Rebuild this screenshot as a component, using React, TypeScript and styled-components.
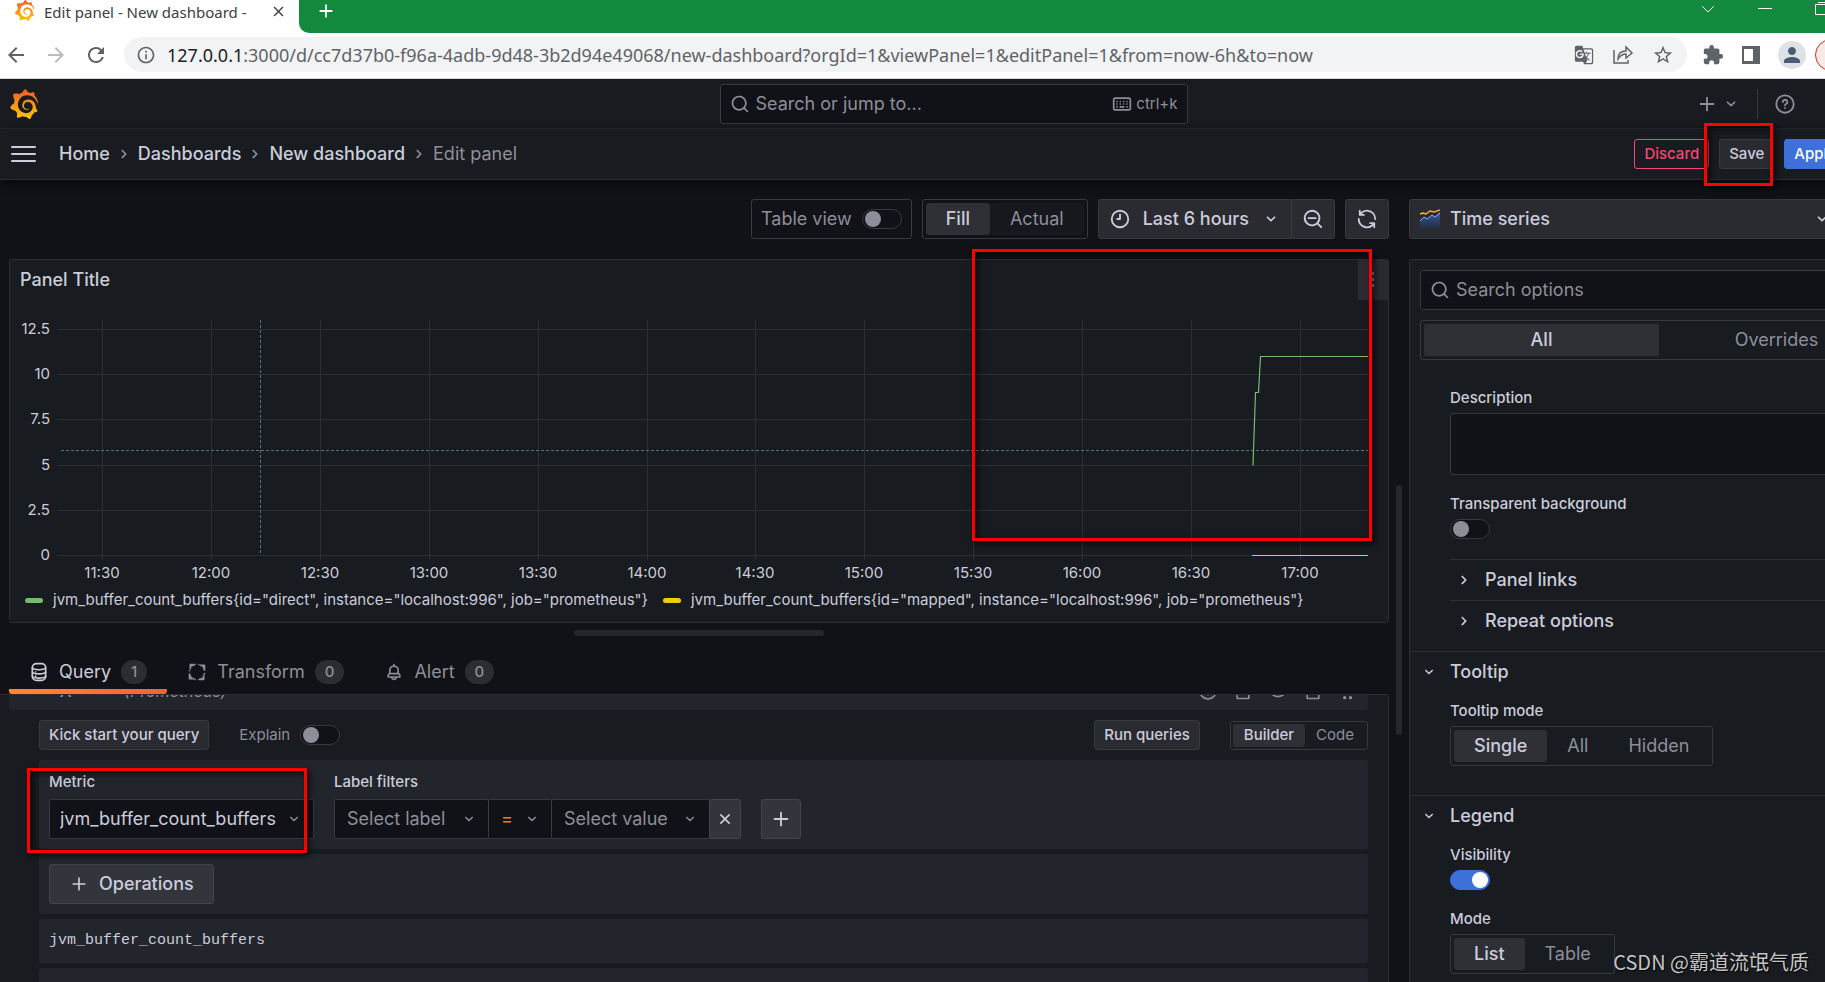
import React from "react";
import styled, { createGlobalStyle, css } from "styled-components";
import { SiGrafana } from "react-icons/si";
import {
  MdArrowBack,
  MdArrowForward,
  MdExtension,
  MdGTranslate,
  MdInfoOutline,
  MdPerson,
  MdRefresh,
  MdStarBorder,
  MdClose,
  MdAdd,
} from "react-icons/md";

const c = {
  canvas: "#111217",
  primary: "#181b1f",
  secondary: "#22252b",
  button: "#2a2b31",
  selected: "#2e3035",
  raised: "#32353c",
  weak: "#2b2d32",
  medium: "#37393f",
  text: "#ccccdc",
  muted: "#8e8e9a",
  blue: "#3d71d9",
  red: "#f3476f",
};

const GlobalStyle = createGlobalStyle`
  *, *::before, *::after { box-sizing: border-box; }
  html, body { margin: 0; background: ${c.canvas}; }
  body { overflow: hidden; }
  body, button, input, select, textarea {
    font-family: Inter, "Noto Sans CJK SC", sans-serif;
    font-size: 18px;
    line-height: 24px;
    color: ${c.text};
  }
  button { cursor: pointer; padding: 0; border: 0; background: none; }
  svg { display: block; flex: none; }
`;

/* ---------- icons ---------- */

const paths = {
  search:
    "M21.71,20.29,18,16.61A9,9,0,1,0,16.61,18l3.68,3.68a1,1,0,0,0,1.42,0A1,1,0,0,0,21.71,20.29ZM11,18a7,7,0,1,1,7-7A7,7,0,0,1,11,18Z",
  zoomOut:
    "M21.71,20.29,18,16.61A9,9,0,1,0,16.61,18l3.68,3.68a1,1,0,0,0,1.42,0A1,1,0,0,0,21.71,20.29ZM11,18a7,7,0,1,1,7-7A7,7,0,0,1,11,18Zm4-8H7a1,1,0,0,0,0,2h8a1,1,0,0,0,0-2Z",
  clock:
    "M12,2A10,10,0,1,0,22,12,10,10,0,0,0,12,2Zm0,18a8,8,0,1,1,8-8A8,8,0,0,1,12,20ZM12,6a1,1,0,0,0-1,1v4H9a1,1,0,0,0,0,2h3a1,1,0,0,0,1-1V7A1,1,0,0,0,12,6Z",
  down:
    "M17,9.17a1,1,0,0,0-1.41,0L12,12.71,8.46,9.17a1,1,0,0,0-1.41,0,1,1,0,0,0,0,1.42l4.24,4.24a1,1,0,0,0,1.42,0L17,10.59A1,1,0,0,0,17,9.17Z",
  right:
    "M14.83,11.29,10.59,7.05a1,1,0,0,0-1.42,0,1,1,0,0,0,0,1.41L12.71,12,9.17,15.54a1,1,0,0,0,0,1.41,1,1,0,0,0,.71.29,1,1,0,0,0,.71-.29l4.24-4.24A1,1,0,0,0,14.83,11.29Z",
  plus: "M19,11H13V5a1,1,0,0,0-2,0v6H5a1,1,0,0,0,0,2h6v6a1,1,0,0,0,2,0V13h6a1,1,0,0,0,0-2Z",
  times:
    "M13.41,12l4.3-4.29a1,1,0,1,0-1.42-1.42L12,10.59,7.71,6.29A1,1,0,0,0,6.29,7.71L10.59,12l-4.3,4.29a1,1,0,0,0,0,1.42,1,1,0,0,0,1.42,0L12,13.41l4.29,4.3a1,1,0,0,0,1.42,0,1,1,0,0,0,0-1.42Z",
  sync:
    "M19.91,15.51H15.38a1,1,0,0,0,0,2h2.4A8,8,0,0,1,4,12a1,1,0,1,0-2,0,10,10,0,0,0,16.88,7.23V21a1,1,0,0,0,2,0V16.5A1,1,0,0,0,19.91,15.51ZM12,2A10,10,0,0,0,5.12,4.77V3a1,1,0,0,0-2,0V7.5a1,1,0,0,0,1,1h4.5a1,1,0,0,0,0-2H6.22A8,8,0,0,1,20,12a1,1,0,0,0,2,0A10,10,0,0,0,12,2Z",
  bell:
    "M18,13.18V10a6,6,0,0,0-5-5.91V3a1,1,0,0,0-2,0V4.09A6,6,0,0,0,6,10v3.18A3,3,0,0,0,4,16v2a1,1,0,0,0,1,1H8.14a4,4,0,0,0,7.72,0H19a1,1,0,0,0,1-1V16A3,3,0,0,0,18,13.18ZM8,10a4,4,0,0,1,8,0v3H8Zm4,10a2,2,0,0,1-1.72-1h3.44A2,2,0,0,1,12,20Zm6-3H6V16a1,1,0,0,1,1-1H17a1,1,0,0,1,1,1Z",
};

const Icon = ({ name, size = 20 }: { name: keyof typeof paths; size?: number }) => (
  <svg width={size} height={size} viewBox="0 0 24 24" fill="currentColor" aria-hidden="true">
    <path d={paths[name]} />
  </svg>
);

const LineIcon = ({ size = 20, children }: { size?: number; children: React.ReactNode }) => (
  <svg
    width={size}
    height={size}
    viewBox="0 0 24 24"
    fill="none"
    stroke="currentColor"
    strokeWidth="2"
    strokeLinecap="round"
    strokeLinejoin="round"
    aria-hidden="true"
  >
    {children}
  </svg>
);

const DatabaseIcon = () => (
  <LineIcon>
    <rect x="4" y="2" width="16" height="20" rx="5" />
    <path d="M4 7c1 3 15 3 16 0M4 12c1 3 15 3 16 0M4 17c1 3 15 3 16 0" />
    <path d="M8 12h.01M8 17h.01" />
  </LineIcon>
);

const TransformIcon = () => (
  <LineIcon>
    <path d="M8 3H4M4 3v5M5 5C6.5 4 8 3.4 9.5 3" />
    <path d="M21 8V4M21 4h-5M19 5C20 6.5 20.6 8 21 9.5" />
    <path d="M16 21H20M20 21v-5M19 19C17.5 20 16 20.6 14.5 21" />
    <path d="M3 16V20M3 20h5M5 19C4 17.5 3.400 16 3 14.5" />
    <path d="M14 3h.01M3 10.5h.01M21 14h.01M10 21h.01" />
  </LineIcon>
);

const HelpIcon = ({ size = 22 }: { size?: number }) => (
  <LineIcon size={size}>
    <circle cx="12" cy="12" r="9.5" />
    <path d="M9.7 9.8a2.4 2.4 0 1 1 3.4 2.2c-.7.3-1.1.7-1.1 1.4M12 16.3v.1" />
  </LineIcon>
);

const KeyboardIcon = () => (
  <LineIcon size={20}>
    <rect x="2" y="5" width="20" height="14" rx="2" />
    <path d="M6 9h.01M10 9h.01M14 9h.01M18 9h.01M6 12h.01M10 12h.01M14 12h.01M18 12h.01M6 15.5h.01M10 15.5h4M18 15.5h.01" />
  </LineIcon>
);

const SeriesIcon = () => (
  <svg width="20" height="20" viewBox="0 0 20 20" aria-hidden="true">
    <defs>
      <linearGradient id="area" x1="0" y1="0" x2="0" y2="1">
        <stop offset="0" stopColor="#3865ab" />
        <stop offset="1" stopColor="#203a66" stopOpacity="0.4" />
      </linearGradient>
      <linearGradient id="amber" x1="0" y1="0" x2="1" y2="0">
        <stop offset="0" stopColor="#f2cc0c" />
        <stop offset="1" stopColor="#ff9830" />
      </linearGradient>
    </defs>
    <path d="M0 12 4 8l3 2 5-4 3 2 5-5v16H0Z" fill="url(#area)" />
    <path d="M0 12 4 8l3 2 5-4 3 2 5-4" fill="none" stroke="#84aff1" />
    <path d="M0 5 3 4l3 1 4-3 4 1 6-2" fill="none" stroke="url(#amber)" strokeWidth="1.5" />
  </svg>
);

const GrafanaMark = ({ size, id }: { size: number; id: string }) => (
  <>
    <svg width="0" height="0" aria-hidden="true">
      <linearGradient id={id} x1="0" y1="0" x2="0" y2="1">
        <stop offset="0" stopColor="#f05a28" />
        <stop offset="1" stopColor="#fbca0a" />
      </linearGradient>
    </svg>
    <SiGrafana size={size} fill={`url(#${id})`} />
  </>
);

/* ---------- shared controls ---------- */

const Button = styled.button<{ $look?: "plain" | "danger" | "main" | "raised"; $size?: "sm" | "md" | "wide" }>`
  display: inline-flex;
  align-items: center;
  justify-content: center;
  gap: ${(p) => (p.$size === "wide" ? 10 : 12)}px;
  border: 1px solid ${c.medium};
  border-radius: 3px;
  background: ${c.button};
  font-weight: 500;
  white-space: nowrap;
  ${(p) =>
    p.$size === "sm"
      ? css`
          height: 30px;
          padding: 0 9px;
          font-size: 15px;
        `
      : css`
          height: 40px;
          padding: 0 ${p.$size === "wide" ? 19 : 10}px;
        `}
  ${(p) => p.$look === "danger" && css`background: transparent; border-color: ${c.red}; color: ${c.red};`}
  ${(p) => p.$look === "main" && css`background: ${c.blue}; border-color: ${c.blue}; color: #fff;`}
  ${(p) => p.$look === "raised" && css`background: ${c.raised}; border-color: #42454c;`}
`;

const Switch = styled.input.attrs({ type: "checkbox" })`
  appearance: none;
  flex: none;
  display: flex;
  align-items: center;
  width: 40px;
  height: 20px;
  margin: 0;
  padding: 0 2px;
  border: 1px solid ${c.medium};
  border-radius: 10px;
  background: ${c.canvas};
  &::before {
    content: "";
    width: 16px;
    height: 16px;
    border-radius: 50%;
    background: ${c.muted};
  }
  &:checked {
    justify-content: flex-end;
    padding: 0 1px;
    border-color: ${c.blue};
    background: ${c.blue};
  }
  &:checked::before {
    background: #fff;
  }
`;

const RadioBox = styled.div<{ $fill?: boolean; $small?: boolean; $tinted?: boolean }>`
  display: ${(p) => (p.$fill ? "flex" : "inline-flex")};
  height: ${(p) => (p.$small ? 29 : 40)}px;
  padding: ${(p) => (p.$small ? 2 : 3)}px;
  border: 1px solid ${c.medium};
  border-radius: 3px;
  label {
    flex: ${(p) => (p.$fill ? "1 1 0" : "none")};
    display: flex;
    align-items: center;
    justify-content: center;
    padding: 0 ${(p) => (p.$small ? 11 : 20)}px;
    border-radius: 3px;
    font-size: ${(p) => (p.$small ? 15 : 18)}px;
    color: ${c.muted};
    background: ${(p) => (p.$tinted ? "#15181c" : "transparent")};
  }
  input {
    appearance: none;
    width: 0;
    height: 0;
    margin: 0;
  }
  label:has(input:checked) {
    background: ${c.selected};
    color: ${c.text};
    font-weight: 500;
  }
`;

const RadioGroup = ({
  name,
  options,
  ...look
}: {
  name: string;
  options: string[];
  $fill?: boolean;
  $small?: boolean;
  $tinted?: boolean;
}) => (
  <RadioBox role="radiogroup" aria-label={name} {...look}>
    {options.map((o, i) => (
      <label key={o}>
        <input type="radio" name={name} defaultChecked={i === 0} />
        {o}
      </label>
    ))}
  </RadioBox>
);

const SelectShell = styled.div<{ $width: number; $tone?: "muted" | "operator" }>`
  display: grid;
  align-items: center;
  width: ${(p) => p.$width}px;
  select,
  svg {
    grid-area: 1 / 1;
  }
  select {
    appearance: none;
    width: 100%;
    height: 40px;
    padding: 0 32px 0 ${(p) => (p.$tone ? 12 : 10)}px;
    border: 1px solid ${c.medium};
    border-radius: 2px;
    background: ${c.canvas};
    color: ${(p) => (p.$tone === "operator" ? "#ff780a" : p.$tone === "muted" ? c.muted : c.text)};
  }
  svg {
    justify-self: end;
    margin-right: 11px;
    color: ${c.muted};
    pointer-events: none;
  }
`;

const Select = ({
  label,
  value,
  width,
  tone,
  id,
}: {
  label: string;
  value: string;
  width: number;
  tone?: "muted" | "operator";
  id?: string;
}) => (
  <SelectShell $width={width} $tone={tone}>
    <select id={id} aria-label={label}>
      <option>{value}</option>
    </select>
    <Icon name="down" size={18} />
  </SelectShell>
);

const TextField = styled.div`
  display: flex;
  align-items: center;
  gap: 6px;
  height: 40px;
  padding: 0 9px;
  border: 1px solid ${c.medium};
  border-radius: 3px;
  background: ${c.canvas};
  color: ${c.muted};
  input {
    flex: 1;
    min-width: 0;
    padding: 0;
    border: 0;
    outline: 0;
    background: none;
  }
  input::placeholder {
    color: ${c.muted};
    opacity: 1;
  }
`;

const Callout = styled.div<{ $box: string }>`
  position: absolute;
  inset: ${(p) => p.$box};
  z-index: 2;
  border: 3px solid #f00;
  box-shadow: 3px 3px 6px rgba(0, 0, 0, 0.6), inset 3px 3px 6px rgba(0, 0, 0, 0.6);
  pointer-events: none;
`;

/* ---------- browser frame ---------- */

const Window = styled.div`
  height: 100vh;
  overflow: hidden;
  position: relative;
`;

const TabStrip = styled.div`
  display: flex;
  height: 33px;
  background: #fff;
`;

const BrowserTab = styled.div`
  flex: none;
  display: flex;
  align-items: flex-start;
  width: 299px;
  padding: 0 0 0 14px;
  font: 15px/24px "Noto Sans", sans-serif;
  color: #3c4043;
  button {
    margin: 3px 0 0 10px;
    color: #3c4043;
  }
`;

const TabTitle = styled.span`
  width: 216px;
  margin-left: 9px;
  overflow: hidden;
  white-space: nowrap;
`;

const StripRest = styled.div`
  flex: 1;
  display: flex;
  align-items: flex-start;
  justify-content: space-between;
  padding-left: 16px;
  border-bottom-left-radius: 10px;
  background: #12893d;
  button { color: #fff; }
`;

const WindowButtons = styled.div`
  display: flex;
  gap: 40px;
  width: 126px;
  overflow: hidden;
`;

const AddressRow = styled.div`
  display: flex;
  align-items: center;
  height: 46px;
  padding: 0 0 2px 4px;
  border-bottom: 1px solid #d5d7da;
  background: #fff;
  overflow: hidden;
  button { color: #5f6368; }
`;

const HistoryButtons = styled.div`
  display: flex;
  gap: 16px;
  margin-right: 16px;
  button:nth-child(2) { color: #b9bbbe; }
`;

const AddressBar = styled.div`
  flex: 1;
  display: flex;
  align-items: center;
  height: 35px;
  padding: 0 13px 0 12px;
  border-radius: 18px;
  background: #f1f3f4;
  color: #5f6368;
  font: 18px/24px "Noto Sans", sans-serif;
`;

const Url = styled.span`
  flex: 1;
  margin-left: 11px;
  white-space: nowrap;
  b { font-weight: 400; color: #202124; }
`;

const AddressActions = styled.div`
  display: flex;
  gap: 18px;
`;

const ExtensionButtons = styled.div`
  display: flex;
  align-items: center;
  gap: 17px;
  width: 138px;
  padding-left: 15px;
`;

const Avatar = styled.span`
  display: grid;
  place-items: center;
  flex: none;
  width: 28px;
  height: 28px;
  border-radius: 50%;
  background: #dee1e6;
  color: #4b5b75;
`;

const UpdatePill = styled.span`
  flex: none;
  width: 60px;
  height: 32px;
  margin-left: -8px;
  border: 1px solid #d93025;
  border-radius: 16px;
  background: #fce8e6;
`;

const BrowserFrame = () => (
  <>
    <TabStrip>
      <BrowserTab>
        <GrafanaMark size={21} id="tabMark" />
        <TabTitle>Edit panel - New dashboard - </TabTitle>
        <button aria-label="Close tab">
          <MdClose size={17} />
        </button>
      </BrowserTab>
      <StripRest>
        <button aria-label="New tab">
          <MdAdd size={22} />
        </button>
        <WindowButtons>
          <button aria-label="Search tabs">
            <svg width="18" height="18" fill="none" stroke="#fff"><path d="m3 6 6 6 6-6" /></svg>
          </button>
          <button aria-label="Minimize">
            <svg width="16" height="18" stroke="#fff"><path d="M1 8.5h14" /></svg>
          </button>
          <button aria-label="Restore">
            <svg width="18" height="18" fill="none" stroke="#fff"><path d="M2.5 4.5h10v10h-10zM5 2.5h10v10" /></svg>
          </button>
        </WindowButtons>
      </StripRest>
    </TabStrip>
    <AddressRow>
      <HistoryButtons>
        <button aria-label="Back"><MdArrowBack size={24} /></button>
        <button aria-label="Forward"><MdArrowForward size={24} /></button>
        <button aria-label="Reload"><MdRefresh size={24} /></button>
      </HistoryButtons>
      <AddressBar>
        <MdInfoOutline size={20} />
        <Url>
          <b>127.0.0.1</b>:3000/d/cc7d37b0-f96a-4adb-9d48-3b2d94e49068/new-dashboard?orgId=1&amp;viewPanel=1&amp;editPanel=1&amp;from=now-6h&amp;to=now
        </Url>
        <AddressActions>
          <button aria-label="Translate"><MdGTranslate size={20} /></button>
          <button aria-label="Share">
            <svg width="22" height="22" fill="none" stroke="currentColor" strokeWidth="1.5">
              <path d="M2 6v13h14v-3M6 15c0-5 3-8 8-8V3l6 6-6 5v-4c-4 0-6 2-8 5Z" />
            </svg>
          </button>
          <button aria-label="Bookmark"><MdStarBorder size={22} /></button>
        </AddressActions>
      </AddressBar>
      <ExtensionButtons>
        <button aria-label="Extensions"><MdExtension size={22} /></button>
        <button aria-label="Side panel">
          <svg width="20" height="20"><path fill="currentColor" fillRule="evenodd" d="M1 1h18v18H1ZM3 4v12h9V4Z" /></svg>
        </button>
        <Avatar><MdPerson size={24} /></Avatar>
        <UpdatePill />
      </ExtensionButtons>
    </AddressRow>
  </>
);

/* ---------- application shell ---------- */

/* The application is wider than the window and runs off its right edge. */
const Shell = styled.div`
  width: calc(100% + 95px);
  background: ${c.canvas};
`;

const TopBar = styled.header`
  display: grid;
  grid-template-columns: 1fr 468px 1fr;
  align-items: center;
  height: 50px;
  padding: 0 22px 0 9px;
  border-bottom: 1px solid ${c.weak};
  background: ${c.primary};
`;

const Hint = styled.span`
  display: flex;
  align-items: center;
  gap: 4px;
  font-size: 15px;
`;

const TopActions = styled.div`
  justify-self: end;
  display: flex;
  align-items: center;
  color: ${c.muted};
  padding-right: 102px;
  button {
    display: flex;
    align-items: center;
    gap: 3px;
    color: inherit;
  }
  hr {
    width: 1px;
    height: 30px;
    margin: 0 16px;
    border: 0;
    background: ${c.medium};
  }
`;

const NavBar = styled.nav`
  position: relative;
  z-index: 1;
  display: flex;
  align-items: center;
  height: 51px;
  padding: 0 74px 0 10px;
  border-bottom: 1px solid ${c.weak};
  background: ${c.primary};
  box-shadow: 0 3px 9px #08090b;
`;

const Crumbs = styled.ol`
  flex: 1;
  display: flex;
  align-items: center;
  margin: 0;
  padding: 0 0 0 23px;
  list-style: none;
  font-weight: 500;
  li { display: flex; align-items: center; }
  li svg { margin: 0 4px; color: ${c.muted}; }
  a { color: inherit; text-decoration: none; }
  li:last-child { color: ${c.muted}; font-weight: 400; }
`;

const NavActions = styled.div`
  display: flex;
  gap: 10px;
`;

const Anchor = styled.div`
  position: relative;
  display: flex;
`;

const Header = () => (
  <>
    <TopBar>
      <a href="#home" aria-label="Grafana home">
        <GrafanaMark size={30} id="homeMark" />
      </a>
      <TextField>
        <Icon name="search" />
        <input aria-label="Search" placeholder="Search or jump to..." />
        <Hint>
          <KeyboardIcon />
          ctrl+k
        </Hint>
      </TextField>
      <TopActions>
        <button aria-label="New">
          <Icon name="plus" size={22} />
          <Icon name="down" />
        </button>
        <hr />
        <button aria-label="Help">
          <HelpIcon />
        </button>
      </TopActions>
    </TopBar>
    <NavBar>
      <button aria-label="Open menu">
        <svg width="26" height="18" stroke={c.text} strokeWidth="2" strokeLinecap="round">
          <path d="M2 2h23M2 9h23M2 16h23" />
        </svg>
      </button>
      <Crumbs>
        {["Home", "Dashboards", "New dashboard"].map((t) => (
          <li key={t}>
            <a href="#crumb">{t}</a>
            <Icon name="right" />
          </li>
        ))}
        <li>Edit panel</li>
      </Crumbs>
      <NavActions>
        <Button $size="sm" $look="danger">Discard</Button>
        <Anchor>
          <Button $size="sm">Save</Button>
          <Callout $box="-16px 1px -17px -15px" />
        </Anchor>
        <Button $size="sm" $look="main">Apply</Button>
      </NavActions>
    </NavBar>
  </>
);

/* ---------- visualization ---------- */

const Workspace = styled.main`
  display: grid;
  grid-template-columns: minmax(0, 1fr) 20px 500px;
  padding: 19px 11px 0 0;
`;

const Column = styled.div`
  display: flex;
  flex-direction: column;
  min-width: 0;
`;

const Tools = styled.div`
  display: flex;
  justify-content: flex-end;
  gap: 10px;
  margin-bottom: 20px;
`;

const ToggleLabel = styled.label<{ $boxed?: boolean }>`
  display: flex;
  align-items: center;
  gap: 10px;
  color: ${c.muted};
  font-size: ${(p) => (p.$boxed ? 18 : 15)}px;
  ${(p) => p.$boxed && css`
    height: 40px;
    padding: 0 9px;
    border: 1px solid ${c.medium};
    border-radius: 3px;
  `}
`;

const Joined = styled.div`
  display: flex;
  button:not(:first-child) {
    margin-left: -1px;
    border-top-left-radius: 0;
    border-bottom-left-radius: 0;
  }
  button:not(:last-child) {
    border-top-right-radius: 0;
    border-bottom-right-radius: 0;
  }
`;

const Panel = styled.section`
  position: relative;
  margin-left: 9px;
  border: 1px solid ${c.weak};
  border-radius: 3px;
  background: ${c.primary};
`;

const PanelHead = styled.div`
  display: flex;
  justify-content: space-between;
  height: 40px;
  padding-left: 10px;
  h2 {
    margin: 0;
    font-size: 18px;
    font-weight: 500;
    line-height: 40px;
  }
  button {
    display: grid;
    place-items: center;
    width: 30px;
    background: ${c.button};
  }
`;

const Plot = styled.svg`
  width: 100%;
  height: auto;
  font-size: 15px;
  fill: ${c.text};
`;

const Legend = styled.ul`
  display: flex;
  gap: 15px;
  margin: 0;
  padding: 5px 15px 10px;
  list-style: none;
  font-size: 15px;
  white-space: nowrap;
  li { display: flex; align-items: center; gap: 10px; }
`;

const Swatch = styled.span<{ $color: string }>`
  width: 18px;
  height: 5px;
  border-radius: 3px;
  background: ${(p) => p.$color};
`;

const rows: [string, number][] = [
  ["12.5", 29], ["10", 74], ["7.5", 119], ["5", 165], ["2.5", 210], ["0", 255],
];
const hours = ["11:30", "12:00", "12:30", "13:00", "13:30", "14:00", "14:30", "15:00", "15:30", "16:00", "16:30", "17:00"];
const columnX = (i: number) => Math.round(92 + (i * 1198) / 11);

const Chart = () => (
  <Plot viewBox="0 0 1378 283" role="img" aria-label="jvm_buffer_count_buffers over the last 6 hours">
    <g shapeRendering="crispEdges" fill="#2c2f32">
      {rows.map(([t, y]) => (
        <rect key={t} x="47" y={y} width="1311" height="1" />
      ))}
      {hours.map((t, i) => (
        <rect key={t} x={columnX(i)} y="20" width="1" height="240" />
      ))}
    </g>
    <g textAnchor="end">
      {rows.map(([t, y]) => (
        <text key={t} x="40" y={y + 5}>{t}</text>
      ))}
    </g>
    <g textAnchor="middle">
      {hours.map((t, i) => (
        <text key={t} x={columnX(i)} y="278">{t}</text>
      ))}
    </g>
    <g fill="none" stroke="#557480" strokeDasharray="3 2" shapeRendering="crispEdges">
      <path d="M250.5 20v235M51 150.5h1307" />
    </g>
    <path d="M1243 165.5 1245.5 92.5h3L1250.5 56.5h107.5" fill="none" stroke="#73bf69" strokeWidth="1.2" />
    <path d="M1242 255.5h116" stroke="#f2cc0c" strokeWidth="1.2" />
  </Plot>
);

const Visualization = () => (
  <>
    <Tools>
      <ToggleLabel $boxed>
        Table view
        <Switch />
      </ToggleLabel>
      <RadioGroup name="Panel size" options={["Fill", "Actual"]} $tinted />
      <Joined>
        <Button>
          <Icon name="clock" size={22} />
          Last 6 hours
          <Icon name="down" />
        </Button>
        <Button aria-label="Zoom out">
          <Icon name="zoomOut" size={22} />
        </Button>
      </Joined>
      <Button aria-label="Refresh">
        <Icon name="sync" size={22} />
      </Button>
    </Tools>
    <Panel>
      <PanelHead>
        <h2>Panel Title</h2>
        <button aria-label="Panel menu">
          <svg width="6" height="18" fill={c.muted}>
            <path d="M1 1h3v3H1zM1 7h3v3H1zM1 13h3v3H1z" />
          </svg>
        </button>
      </PanelHead>
      <Chart />
      <Legend>
        <li>
          <Swatch $color="#73bf69" />
          jvm_buffer_count_buffers&#123;id="direct", instance="localhost:996", job="prometheus"&#125;
        </li>
        <li>
          <Swatch $color="#f2cc0c" />
          jvm_buffer_count_buffers&#123;id="mapped", instance="localhost:996", job="prometheus"&#125;
        </li>
      </Legend>
      <Callout $box="-11px 16px 81px 962px" />
    </Panel>
  </>
);

/* ---------- query editor ---------- */

const Handle = styled.div<{ $vertical?: boolean }>`
  border-radius: 3px;
  background: #26272c;
  ${(p) =>
    p.$vertical
      ? css`width: 6px; height: 250px; margin: 286px 7px 0;`
      : css`width: 250px; height: 6px; align-self: center; margin: 7px 0 0 9px;`}
`;

const TabRow = styled.div`
  display: flex;
  padding: 14px 0 0 9px;
`;

const TabButton = styled.button<{ $active?: boolean }>`
  display: flex;
  align-items: center;
  gap: 10px;
  height: 44px;
  padding: 0 20px;
  color: ${(p) => (p.$active ? c.text : c.muted)};
  ${(p) => p.$active && css`
    border-radius: 3px;
    background: linear-gradient(to right, #ff8833, #f55f3e) bottom / 100% 5px no-repeat;
  `}
`;

const Count = styled.span`
  padding: 0 10px;
  border-radius: 12px;
  background: #2b2d32;
  color: ${c.muted};
  font-size: 15px;
  font-weight: 500;
`;

const Editor = styled.section`
  flex: 1;
  padding: 0 20px 0 9px;
  border: solid ${c.weak};
  border-width: 1px 1px 0 0;
  border-top-right-radius: 3px;
  background: ${c.primary};
`;

/* Only the lower edge of the query header shows; the rest is scrolled away. */
const ScrolledHead = styled.div`
  display: flex;
  align-items: flex-end;
  height: 15px;
  overflow: hidden;
  border-radius: 0 0 3px 3px;
  background: ${c.secondary};
`;

const HeadContent = styled.div`
  flex: 1;
  display: flex;
  align-items: center;
  gap: 15px;
  height: 38px;
  padding: 0 10px 0 51px;
  color: ${c.muted};
  font-size: 16px;
  b { color: #6e9fff; font-weight: 500; margin-right: 38px; }
  i { flex: 1; }
`;

const EditorBody = styled.div`
  display: flex;
  flex-direction: column;
  gap: 5px;
  padding: 10px 0 0 30px;
`;

const EditorBar = styled.div`
  display: flex;
  align-items: center;
  gap: 30px;
  margin-bottom: 5px;
`;

const Spacer = styled.span`
  flex: 1;
`;

const Block = styled.div`
  position: relative;
  display: flex;
  gap: 20px;
  min-height: 44px;
  padding: 10px;
  border-radius: 3px;
  background: ${c.secondary};
`;

const Caption = styled.label`
  display: block;
  margin-bottom: 5px;
  font-size: 15px;
  font-weight: 500;
  line-height: 24px;
`;

const FilterRow = styled.div`
  display: flex;
  > *:not(:first-child) { margin-left: -1px; }
  > button { padding: 0 5px; }
  > button:last-child { margin-left: 20px; padding: 0 8px; }
`;

const Code = styled.code`
  font: 15px/24px "Liberation Mono", monospace;
`;

const QueryEditor = () => (
  <>
    <Handle />
    <TabRow role="tablist">
      <TabButton role="tab" aria-selected $active>
        <DatabaseIcon />
        Query
        <Count>1</Count>
      </TabButton>
      <TabButton role="tab">
        <TransformIcon />
        Transform
        <Count>0</Count>
      </TabButton>
      <TabButton role="tab">
        <Icon name="bell" />
        Alert
        <Count>0</Count>
      </TabButton>
    </TabRow>
    <Editor>
      <ScrolledHead>
        <HeadContent>
          <b>A</b>
          <i>(Prometheus)</i>
          <HelpIcon size={20} />
          <LineIcon><path d="M5 3h14v18H5z" /></LineIcon>
          <LineIcon><path d="M2 12c5-9 15-9 20 0-5 9-15 9-20 0Z" /></LineIcon>
          <LineIcon><path d="M5 7h14v14H5z" /></LineIcon>
          <LineIcon><path strokeWidth="4" d="M8 6h.01M15 6h.01M8 13h.01M15 13h.01M8 20h.01M15 20h.01" /></LineIcon>
        </HeadContent>
      </ScrolledHead>
      <EditorBody>
        <EditorBar>
          <Button $size="sm">Kick start your query</Button>
          <ToggleLabel>
            Explain
            <Switch />
          </ToggleLabel>
          <Spacer />
          <Button $size="sm">Run queries</Button>
          <RadioGroup name="Editor mode" options={["Builder", "Code"]} $small />
        </EditorBar>
        <Block>
          <div>
            <Caption htmlFor="metric">Metric</Caption>
            <Select id="metric" label="Metric" value="jvm_buffer_count_buffers" width={265} />
          </div>
          <div>
            <Caption htmlFor="filter">Label filters</Caption>
            <FilterRow>
              <Select id="filter" label="Label" value="Select label" width={155} tone="muted" />
              <Select label="Operator" value="=" width={64} tone="operator" />
              <Select label="Value" value="Select value" width={159} tone="muted" />
              <Button $look="raised" aria-label="Remove filter"><Icon name="times" /></Button>
              <Button $look="raised" aria-label="Add filter"><Icon name="plus" size={22} /></Button>
            </FilterRow>
          </div>
          <Callout $box="8px calc(100% - 268px) -4px -12px" />
        </Block>
        <Block>
          <Button $look="raised" $size="wide">
            <Icon name="plus" />
            Operations
          </Button>
        </Block>
        <Block>
          <Code>jvm_buffer_count_buffers</Code>
        </Block>
        <Block />
      </EditorBody>
    </Editor>
  </>
);

/* ---------- options pane ---------- */

const VizPicker = styled(Button)`
  width: 100%;
  justify-content: flex-start;
  gap: 10px;
  margin-bottom: 20px;
  padding-right: 76px;
  svg:last-child { margin-left: auto; }
`;

const Options = styled.aside`
  flex: 1;
  border: 1px solid ${c.weak};
  border-bottom: 0;
  border-radius: 3px 3px 0 0;
  background: ${c.primary};
`;

const OptionTop = styled.div`
  display: grid;
  gap: 10px;
  padding: 10px;
`;

const OptionSection = styled.section<{ $first?: boolean }>`
  padding: ${(p) => (p.$first ? "16px 10px 10px 40px" : "8px 10px 29px 40px")};
  border-top: ${(p) => (p.$first ? "0" : `1px solid ${c.weak}`)};
`;

const SectionTitle = styled.button`
  display: flex;
  align-items: center;
  gap: 12px;
  margin: 0 0 15px -30px;
  font-weight: 500;
`;

const SubSection = styled.button`
  display: flex;
  align-items: center;
  gap: 11px;
  width: 100%;
  height: 41px;
  padding-left: 4px;
  border-top: 1px solid ${c.weak};
  font-weight: 500;
`;

const Field = styled.div<{ $gap?: number }>`
  margin-bottom: ${(p) => p.$gap ?? 0}px;
  ${Caption} { margin-bottom: 3px; }
`;

const Area = styled.textarea`
  display: block;
  width: 100%;
  height: 62px;
  border: 1px solid ${c.medium};
  border-radius: 3px;
  background: ${c.canvas};
  resize: none;
`;

const OptionsPane = () => (
  <Column>
    <VizPicker>
      <SeriesIcon />
      Time series
      <Icon name="down" />
    </VizPicker>
    <Options>
      <OptionTop>
        <TextField>
          <Icon name="search" />
          <input aria-label="Search options" placeholder="Search options" />
        </TextField>
        <RadioGroup name="Option filter" options={["All", "Overrides"]} $fill />
      </OptionTop>
      <OptionSection $first>
        <Field $gap={17}>
          <Caption htmlFor="description">Description</Caption>
          <Area id="description" />
        </Field>
        <Field $gap={20}>
          <Caption htmlFor="transparent">Transparent background</Caption>
          <Switch id="transparent" />
        </Field>
        <SubSection>
          <Icon name="right" />
          Panel links
        </SubSection>
        <SubSection>
          <Icon name="right" />
          Repeat options
        </SubSection>
      </OptionSection>
      <OptionSection>
        <SectionTitle>
          <Icon name="down" size={18} />
          Tooltip
        </SectionTitle>
        <Field>
          <Caption as="span">Tooltip mode</Caption>
          <RadioGroup name="Tooltip mode" options={["Single", "All", "Hidden"]} />
        </Field>
      </OptionSection>
      <OptionSection>
        <SectionTitle>
          <Icon name="down" size={18} />
          Legend
        </SectionTitle>
        <Field $gap={17}>
          <Caption htmlFor="visibility">Visibility</Caption>
          <Switch id="visibility" defaultChecked />
        </Field>
        <Field>
          <Caption as="span">Mode</Caption>
          <RadioGroup name="Legend mode" options={["List", "Table"]} />
        </Field>
      </OptionSection>
    </Options>
  </Column>
);

const Watermark = styled.div`
  position: absolute;
  right: 16px;
  bottom: 5px;
  z-index: 3;
  font: 20px/30px "Noto Sans CJK SC", sans-serif;
  color: #c4c5c7;
  text-shadow: 1px 1px 1px #000;
`;

export default function App() {
  return (
    <Window>
      <GlobalStyle />
      <BrowserFrame />
      <Shell>
        <Header />
        <Workspace>
          <Column>
            <Visualization />
            <QueryEditor />
          </Column>
          <Handle $vertical />
          <OptionsPane />
        </Workspace>
      </Shell>
      <Watermark>CSDN @霸道流氓气质</Watermark>
    </Window>
  );
}
